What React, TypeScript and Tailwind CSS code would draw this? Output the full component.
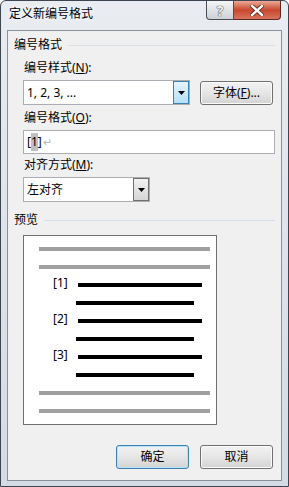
import React from "react";

const font = { fontFamily: '"Noto Sans", "Noto Sans CJK SC", sans-serif' };

function Arrow() {
  return (
    <svg width="7" height="4" viewBox="0 0 7 4">
      <path d="M0 0 H7 L3.5 4 Z" fill="#000" />
    </svg>
  );
}

function GroupHeader({ title }: { title: string }) {
  return (
    <div className="flex items-center h-[16px] pl-[6px] pr-[6px] gap-[6px]">
      <span className="leading-none">{title}</span>
      <div className="flex-1 h-px bg-[#d5dfe5]" />
    </div>
  );
}

function WinButton({ label, primary }: { label: React.ReactNode; primary?: boolean }) {
  return (
    <button
      className={
        "w-[73px] h-[24px] rounded-[3px] border flex items-center justify-center leading-none bg-gradient-to-b from-[#f2f2f2] via-[#e6e6e6] to-[#d3d3d3] " +
        (primary
          ? "border-[#3c7fb1] shadow-[inset_0_0_0_1px_#b6e3f9]"
          : "border-[#707070] shadow-[inset_0_0_0_1px_#fbfbfb]")
      }
    >
      {label}
    </button>
  );
}

export default function App() {
  return (
    <div
      className="w-[289px] h-[487px] flex flex-col text-[12px] text-black rounded-t-[6px] border border-[#3d4550] bg-gradient-to-b from-[#e9edf1] via-[#dde3e9] to-[#d4dbe2] overflow-hidden"
      style={font}
    >
      {/* title bar */}
      <div className="h-[29px] flex items-start shrink-0">
        <div className="pl-[8px] pt-[7px] leading-none [text-shadow:0_0_6px_#fff]">定义新编号格式</div>
        <div className="ml-auto mr-[7px] flex">
          <div className="w-[28px] h-[19px] border border-t-0 border-[#4a4f57] rounded-bl-[4px] bg-gradient-to-b from-[#f4f5f6] to-[#cdd1d6] flex items-center justify-center text-[14px] font-bold text-[#eceff2] [text-shadow:0_0_1px_#333,0_0_1px_#333]">
            ?
          </div>
          <div className="w-[47px] h-[19px] border border-l-0 border-t-0 border-[#5a2a22] rounded-br-[4px] bg-gradient-to-b from-[#e9a996] via-[#c9462d] to-[#d7735c] flex items-center justify-center">
            <svg width="14" height="11" viewBox="0 0 14 11">
              <path d="M2 1 L12 10 M12 1 L2 10" stroke="#55261d" strokeWidth="4" strokeLinecap="square" />
              <path d="M2 1 L12 10 M12 1 L2 10" stroke="#fff" strokeWidth="2.4" strokeLinecap="square" />
            </svg>
          </div>
        </div>
      </div>

      {/* client area */}
      <div className="mx-[6px] mb-[5px] flex-1 border border-[#8a9099] bg-[#f0f0f0] flex flex-col">
        <div className="mt-[6px]">
          <GroupHeader title="编号格式" />
        </div>

        <div className="mt-[7px] pl-[16px] h-[16px] leading-[16px]">
          编号样式(<span className="underline">N</span>):
        </div>
        <div className="mt-[4px] pl-[15px] flex items-start gap-[10px]">
          <div className="w-[167px] h-[25px] border border-[#abadb3] bg-white flex items-center">
            <span className="pl-[3px] flex-1">1, 2, 3, ...</span>
            <div className="w-[16px] h-[23px] border border-[#3c7fb1] bg-gradient-to-b from-[#e5f4fc] to-[#b3e0f9] flex items-center justify-center">
              <Arrow />
            </div>
          </div>
          <div className="mt-[1px]">
            <WinButton
              label={
                <span>
                  字体(<span className="underline">F</span>)...
                </span>
              }
            />
          </div>
        </div>

        <div className="mt-[5px] pl-[16px] h-[16px] leading-[16px]">
          编号格式(<span className="underline">O</span>):
        </div>
        <div className="mt-[4px] pl-[15px] pr-[6px]">
          <div className="h-[24px] border border-[#abadb3] bg-white flex items-center pl-[3px]">
            <span>[</span>
            <span className="bg-[#c0c0c0]">1</span>
            <span>]</span>
            <span className="text-[#b8b8b8] text-[11px] ml-[1px]">↵</span>
          </div>
        </div>

        <div className="mt-[3px] pl-[16px] h-[16px] leading-[16px]">
          对齐方式(<span className="underline">M</span>):
        </div>
        <div className="mt-[4px] pl-[15px]">
          <div className="w-[127px] h-[25px] border border-[#abadb3] bg-white flex items-center">
            <span className="pl-[3px] flex-1">左对齐</span>
            <div className="w-[16px] h-[23px] border border-[#707070] bg-gradient-to-b from-[#f2f2f2] to-[#d5d5d5] flex items-center justify-center">
              <Arrow />
            </div>
          </div>
        </div>

        <div className="mt-[10px]">
          <GroupHeader title="预览" />
        </div>

        {/* preview */}
        <div className="mt-[7px] ml-[15px] w-[194px] border border-[#6f6f6f] bg-white pt-[11px] pb-[11px] flex flex-col gap-[14px]">
          <div className="ml-[15px] w-[171px] h-[4px] bg-[#a0a0a0]" />
          <div className="ml-[15px] w-[171px] h-[4px] bg-[#a0a0a0]" />
          {[1, 2, 3].map((n) => (
            <React.Fragment key={n}>
              <div className="h-[4px] flex items-center">
                <span className="ml-[29px] w-[25px] leading-none -translate-y-[2px]">[{n}]</span>
                <div className="w-[124px] h-[4px] bg-black" />
              </div>
              <div className="ml-[52px] w-[118px] h-[4px] bg-black" />
            </React.Fragment>
          ))}
          <div className="ml-[15px] w-[171px] h-[4px] bg-[#a0a0a0]" />
          <div className="ml-[15px] w-[171px] h-[4px] bg-[#a0a0a0]" />
        </div>

        <div className="mt-auto mb-[11px] flex justify-end gap-[11px] pr-[8px]">
          <WinButton label="确定" primary />
          <WinButton label="取消" />
        </div>
      </div>
    </div>
  );
}
